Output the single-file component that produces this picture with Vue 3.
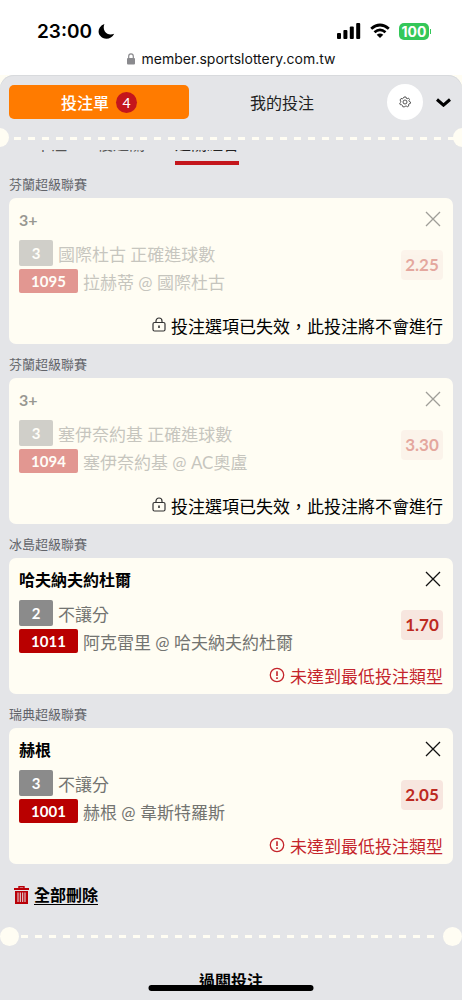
<script setup>
import { ref } from 'vue'

const bets = ref([
  { league: '芬蘭超級聯賽', pick: '3+', kind: '3', market: '國際杜古 正確進球數', code: '1095', match: '拉赫蒂 @ 國際杜古', odds: '2.25', disabled: true },
  { league: '芬蘭超級聯賽', pick: '3+', kind: '3', market: '塞伊奈約基 正確進球數', code: '1094', match: '塞伊奈約基 @ AC奧盧', odds: '3.30', disabled: true },
  { league: '冰島超級聯賽', pick: '哈夫納夫約杜爾', kind: '2', market: '不讓分', code: '1011', match: '阿克雷里 @ 哈夫納夫約杜爾', odds: '1.70', disabled: false },
  { league: '瑞典超級聯賽', pick: '赫根', kind: '3', market: '不讓分', code: '1001', match: '赫根 @ 韋斯特羅斯', odds: '2.05', disabled: false },
])
const tabs = ['單注', '複過關', '過關組合']
const remove = (i) => bets.value.splice(i, 1)
</script>

<template>
  <div class="screen">
    <div class="browser">
      <div class="status">
        <div class="clock">
          <span>23:00</span>
          <svg width="17" height="17" viewBox="0 0 17 17"><path d="M6.400 1C.5 3.200-.8 8.800 2 12.600 5.500 17.400 13.300 17 16.200 10.800 12.500 12.300 8.800 11.500 6.900 8.600 5.400 6.200 5.400 3.500 6.400 1Z" /></svg>
        </div>
        <div class="signals">
          <svg width="24" height="16" viewBox="0 0 24 16"><rect x="0" y="10" width="4" height="6" rx="1" /><rect x="6.400" y="7" width="4" height="9" rx="1" /><rect x="12.800" y="3.500" width="4" height="12.500" rx="1" /><rect x="19.200" y="0" width="4" height="16" rx="1" /></svg>
          <svg width="20" height="16" viewBox="0 0 20 16"><g fill="none" stroke="#000" stroke-width="2.800"><path d="M1.200 5.800Q10-1.800 18.800 5.800" /><path d="M4.500 9.300Q10 4.500 15.500 9.300" /></g><path d="M6.700 11.800Q10 9 13.300 11.800L10 15Z" /></svg>
          <span class="battery">100</span>
        </div>
      </div>
      <div class="address">
        <svg width="8" height="12" viewBox="0 0 8 12"><rect y="5" width="8" height="6.500" rx="1" fill="#8a8a8e" /><path d="M1.700 5.500V3.200a2.300 2.300 0 0 1 4.600 0v2.300" fill="none" stroke="#8a8a8e" stroke-width="1.200" /></svg>
        <span>member.sportslottery.com.tw</span>
      </div>
    </div>

    <div class="backdrop">
      <main class="slip">
        <header class="top">
          <button class="slip-tab">投注單<span class="count">4</span></button>
          <button class="my-tab">我的投注</button>
          <button class="gear" aria-label="設定">
            <svg width="12" height="12" viewBox="0 0 24 24" fill="none" stroke="#555" stroke-width="2"><path d="M10 2h4l.8 2.800 1.600.7L19 4.200 21 7l-1.200 2 .5 1.500L23 12l-.5 3.200-2.500.6-1 1.600.5 2.600-3 1.500-2-1.500h-1.700L11 22l-3.500-.6-.7-2.600-1.500-1.200-2.800-.2L1.500 14l2-1.800v-1.700L2 8l2-3 2.800.5 1.600-.8z" /><circle cx="12" cy="12" r="4" /></svg>
          </button>
          <button class="fold" aria-label="收合">
            <svg width="15" height="9" viewBox="0 0 15 9" fill="none" stroke="#000" stroke-width="3"><path d="M1 1.500 7.500 7.200 14 1.500" /></svg>
          </button>
        </header>

        <div class="tear half"></div>

        <nav class="modes">
          <button v-for="(t, i) in tabs" :key="t" :class="{ on: i === 2 }">{{ t }}</button>
        </nav>

        <section v-for="(b, i) in bets" :key="b.code" class="bet">
          <h2>{{ b.league }}</h2>
          <article :class="{ off: b.disabled }">
            <div class="pick fade">
              <strong>{{ b.pick }}</strong>
              <button aria-label="移除" @click="remove(i)">
                <svg width="16" height="16" viewBox="0 0 16 16" fill="none" stroke="#111" stroke-width="1.300"><path d="M1 1 15 15M15 1 1 15" /></svg>
              </button>
            </div>
            <div class="body fade">
              <div class="lines">
                <div class="line"><span class="tag kind">{{ b.kind }}</span><span>{{ b.market }}</span></div>
                <div class="line"><span class="tag code">{{ b.code }}</span><span>{{ b.match }}</span></div>
              </div>
              <span class="odds">{{ b.odds }}</span>
            </div>
            <p v-if="b.disabled" class="note">
              <svg width="14" height="16" viewBox="0 0 14 16" fill="none" stroke="#333" stroke-width="1.200"><rect x="1" y="5.500" width="12" height="8.500" rx="1.500" /><path d="M4 5.500V4a3 3 0 0 1 6 0v1.500" /><path d="M7 8.500v2.500" stroke-width="1.600" /></svg>
              <span>投注選項已失效，此投注將不會進行</span>
            </p>
            <p v-else class="note warn">
              <svg width="16" height="16" viewBox="0 0 16 16" fill="none" stroke="#c4242b" stroke-width="1.300"><circle cx="8" cy="8" r="6.700" /><path d="M8 4.200v4.800M8 10.300v1.700" stroke-width="1.600" /></svg>
              <span>未達到最低投注類型</span>
            </p>
          </article>
        </section>

        <button class="clear" @click="bets = []">
          <svg width="15" height="18" viewBox="0 0 15 18"><path d="M5 2V.7h5V2" fill="none" stroke="#b90008" stroke-width="1.400" /><path d="M0 2h15v2H0zM1 5h13v13H1z" fill="#b90008" /><path d="M4 6.500v9.500M6.300 6.500v9.500M8.700 6.500v9.500M11 6.500v9.500" stroke="#e4e5e8" stroke-width="1" /></svg>
          <span>全部刪除</span>
        </button>

        <div class="tear"></div>
        <h3>過關投注</h3>
      </main>
    </div>
    <div class="home"></div>
  </div>
</template>

<style>
html, body, #app { height: 100%; }
body { margin: 0; overflow: hidden; }
</style>

<style scoped>
.screen {
  position: relative;
  display: flex;
  flex-direction: column;
  height: 100%;
  overflow: hidden;
  background: #fff;
  color: #000;
  font-family: Lato, "Noto Sans CJK TC", sans-serif;
  font-size: 16px;
}
button { margin: 0; padding: 0; border: 0; background: none; color: inherit; font: inherit; cursor: pointer; }
svg { display: block; flex: none; }
h2, h3, p { margin: 0; }
.browser { flex: none; font-family: Inter, sans-serif; padding-top: 20px; }
.status { display: flex; justify-content: space-between; align-items: center; height: 22px; padding: 0 33px 0 37px; }
.clock { display: flex; align-items: center; gap: 6px; font-size: 19px; font-weight: 600; }
.signals { display: flex; align-items: center; gap: 9px; }
.battery {
  position: relative;
  width: 30px;
  height: 17px;
  border-radius: 5px;
  background: #34c759;
  color: #fff;
  font-size: 14px;
  font-weight: 700;
  line-height: 17px;
  text-align: center;
}
.battery::after { content: ""; position: absolute; right: -2px; top: 6px; width: 1px; height: 5px; background: #34c759; }
.address { display: flex; justify-content: center; align-items: center; gap: 7px; height: 33px; font-size: 14px; color: #111; }
.backdrop { flex: 1; min-height: 0; background: #fffdf3; }
.slip { height: 100%; overflow: hidden; background: #e4e5e8; border-radius: 14px 14px 0 0; box-shadow: inset 0 1px #d8dadd; }
.top { display: grid; grid-template-columns: 180px 1fr 36px 15px; align-items: center; column-gap: 13px; padding: 9px 11px 0 9px; }
.slip-tab {
  display: flex;
  justify-content: center;
  align-items: center;
  gap: 7px;
  height: 34px;
  border-radius: 5px;
  background: #ff7b00;
  color: #fff;
  font-weight: 500;
}
.count { width: 21px; border-radius: 50%; background: #c4161c; font-size: 14px; line-height: 21px; }
.my-tab { padding-right: 12px; color: #222; }
.gear { display: grid; place-items: center; width: 36px; height: 36px; border-radius: 50%; background: #fff; }
.tear {
  display: flex;
  justify-content: space-between;
  align-items: center;
  height: 20px;
  background: repeating-linear-gradient(90deg, #fffdf3 0 7px, #e4e5e8 7px 14px) 21px 9px / calc(100% - 42px) 3px no-repeat;
}
.tear::before, .tear::after { content: ""; width: 19px; height: 19px; border-radius: 50%; background: #fffdf3; }
.tear.half { margin: 7px -10px 0; background-position: 24px 10px; }
.modes { display: flex; align-items: flex-end; gap: 30px; height: 15px; margin: 3px 0 6px 35px; overflow: hidden; }
.modes button { flex: none; padding-bottom: 7px; border-bottom: 4px solid transparent; line-height: 20px; color: #555; }
.modes .on { border-color: #c4161c; color: #222; }
.bet h2 { padding: 0 9px; color: #62646a; font-size: 13px; font-weight: 400; line-height: 27px; }
.bet article { margin: 0 9px 7px; padding: 9px 10px 7px; border-radius: 7px; background: #fffdf3; }
.pick { display: flex; justify-content: space-between; align-items: center; height: 24px; }
.pick strong { font-weight: 700; }
.pick button { margin-right: 2px; }
.body { display: flex; justify-content: space-between; align-items: flex-start; margin-top: 8px; }
.line { display: flex; align-items: center; gap: 5px; height: 28px; color: #737471; font-size: 17px; }
.tag { border-radius: 2px; color: #fff; font-size: 15px; font-weight: 700; text-align: center; }
.kind { width: 34px; line-height: 26px; background: #8b8b8b; }
.code { width: 59px; line-height: 24px; background: #b90000; }
.odds { width: 42px; margin-top: 11px; border-radius: 4px; background: #f7e6df; color: #bd2921; font-size: 17px; font-weight: 700; line-height: 30px; text-align: center; }
.off .fade { opacity: .4; }
.note { display: flex; justify-content: flex-end; align-items: center; gap: 5px; height: 24px; margin-top: 8px; font-size: 17px; }
.off .note { margin-top: 18px; }
.warn { color: #c4242b; }
.clear { display: flex; align-items: center; gap: 5px; height: 24px; margin: 19px 14px 0; font-weight: 700; }
.clear span { border-bottom: 1px solid #000; line-height: 19px; }
.clear + .tear { margin-top: 19px; }
h3 { padding-top: 24px; font-size: 16px; font-weight: 700; line-height: 22px; text-align: center; }
.home { position: absolute; left: 50%; bottom: 9px; width: 165px; height: 6px; border-radius: 3px; background: #000; transform: translateX(-50%); }
</style>
